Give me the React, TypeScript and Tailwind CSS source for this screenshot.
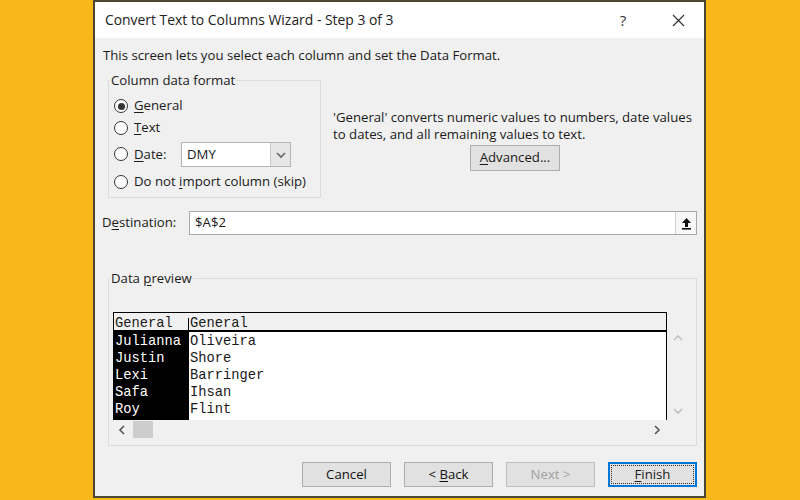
import React from 'react';

const ui = "font-['Open_Sans','Noto_Sans',sans-serif]";
const mono = "font-['Liberation_Mono','Courier_New',monospace]";

function Radio({ checked }: { checked?: boolean }) {
  return (
    <span className="flex h-[14px] w-[14px] shrink-0 items-center justify-center rounded-full border border-[#333] bg-white">
      {checked && <span className="h-[7px] w-[7px] rounded-full bg-[#333]" />}
    </span>
  );
}

function Option({ label, checked, className = '' }: { label: React.ReactNode; checked?: boolean; className?: string }) {
  return (
    <div className={`flex items-center gap-[6px] pl-[5px] ${className}`}>
      <Radio checked={checked} />
      <span className="whitespace-nowrap">{label}</span>
    </div>
  );
}

function Button({ children, variant = 'normal' }: { children: React.ReactNode; variant?: 'normal' | 'disabled' | 'default' }) {
  if (variant === 'default') {
    return (
      <div className="flex h-[25px] w-[89px] items-center justify-center border-2 border-[#0078d7] bg-[#e1e1e1] p-[1px]">
        <div className="flex h-full w-full items-center justify-center border border-dotted border-[#333]">{children}</div>
      </div>
    );
  }
  return (
    <div
      className={`flex h-[25px] w-[89px] items-center justify-center border bg-[#e1e1e1] ${
        variant === 'disabled' ? 'border-[#bfbfbf] bg-[#cccccc] text-[#a0a0a0]' : 'border-[#adadad] text-[#111]'
      }`}
    >
      {children}
    </div>
  );
}

function Chevron({ dir, className = '' }: { dir: 'up' | 'down' | 'left' | 'right'; className?: string }) {
  const pts = {
    up: '2,7 6,3 10,7',
    down: '2,4 6,8 10,4',
    left: '7,2 3,6 7,10',
    right: '4,2 8,6 4,10',
  }[dir];
  return (
    <svg width="12" height="12" viewBox="0 0 12 12" className={className}>
      <polyline points={pts} fill="none" stroke="currentColor" strokeWidth="1.6" />
    </svg>
  );
}

const rows = [
  ['Julianna', 'Oliveira'],
  ['Justin', 'Shore'],
  ['Lexi', 'Barringer'],
  ['Safa', 'Ihsan'],
  ['Roy', 'Flint'],
];

export default function App() {
  return (
    <div className={`h-[500px] w-[800px] bg-[#f9b81a] ${ui} text-[13.2px] text-[#1a1a1a]`}>
      <div className="ml-[93px] flex h-[498px] w-[613px] flex-col border-2 border-[#4a4632] bg-[#f0f0f0]">
        {/* Title bar */}
        <div className="flex h-[36px] items-center bg-white">
          <span className="flex-1 pl-[10px] text-[13.9px] text-[#222]">Convert Text to Columns Wizard - Step 3 of 3</span>
          <span className="flex w-[46px] justify-center text-[15px] text-[#333]">?</span>
          <span className="ml-[9px] mr-[3px] flex w-[46px] justify-center text-[#333]">
            <svg width="13" height="13" viewBox="0 0 13 13">
              <path d="M1 1L12 12M12 1L1 12" stroke="currentColor" strokeWidth="1.2" />
            </svg>
          </span>
        </div>

        <p className="mt-[9px] pl-[8px] leading-[16px]">This screen lets you select each column and set the Data Format.</p>

        {/* Format options + description */}
        <div className="mt-[9px] flex">
          <fieldset className="ml-[13px] h-[126px] w-[213px] border border-[#dcdcdc]">
            <legend className="ml-[1px] px-[1px] leading-[16px]">Column data format</legend>
            <div className="pt-[7px]">
              <Option checked className="h-[22px]" label={<><u className="underline-offset-2">G</u>eneral</>} />
              <Option className="h-[22px]" label={<><u className="underline-offset-2">T</u>ext</>} />
              <div className="mt-[3px] flex h-[25px] items-center">
                <Option className="w-[72px]" label={<><u className="underline-offset-2">D</u>ate:</>} />
                <div className="flex h-[25px] w-[110px] items-center border border-[#b4b4b4] bg-white">
                  <span className="flex-1 pl-[5px]">DMY</span>
                  <span className="flex h-full w-[20px] items-center justify-center border-l border-[#c8c8c8] bg-[#e6e6e6] text-[#666]">
                    <Chevron dir="down" />
                  </span>
                </div>
              </div>
              <Option
                className="mt-[4px] h-[22px]"
                label={<>Do not <u className="underline-offset-2">i</u>mport column (skip)</>}
              />
            </div>
          </fieldset>

          <div className="ml-[12px] mt-[37px] flex w-[364px] flex-col items-center">
            <div className="w-full whitespace-nowrap leading-[17px]">
              'General' converts numeric values to numbers, date values
            </div>
            <div className="w-full whitespace-nowrap leading-[17px]">to dates, and all remaining values to text.</div>
            <div className="mt-[2px] flex h-[26px] w-[90px] items-center justify-center border border-[#adadad] bg-[#e1e1e1]">
              <span><u className="underline-offset-2">A</u>dvanced...</span>
            </div>
          </div>
        </div>

        {/* Destination */}
        <div className="mt-[13px] flex h-[24px] items-center">
          <span className="w-[94px] pl-[7px]">D<u className="underline-offset-2">e</u>stination:</span>
          <div className="flex h-full w-[508px] items-center border border-[#a8a8a8] bg-white">
            <span className="flex-1 pl-[5px]">$A$2</span>
            <span className="flex h-full w-[21px] items-center justify-center border-l border-[#d0d0d0] bg-[#f7f7f7]">
              <svg width="11" height="13" viewBox="0 0 11 13">
                <path d="M5.5 1L1 6h3v4h3V6h3z" fill="#111" />
                <rect x="1" y="11" width="9" height="1.6" fill="#111" />
              </svg>
            </span>
          </div>
        </div>

        {/* Data preview */}
        <fieldset className="ml-[13px] mt-[35px] h-[176px] w-[589px] border border-[#dcdcdc]">
          <legend className="ml-[1px] px-[1px] leading-[16px]">
            Data <u className="underline-offset-2">p</u>review
          </legend>
          <div className="mt-[26px] pl-[4px]">
            <div className="flex">
              <div className={`w-[554px] ${mono} text-[13.75px] leading-[17px]`}>
                {/* column headers */}
                <div className="flex h-[18px] items-end overflow-hidden border-x border-t border-black bg-[#f0f0f0]">
                  <span className="w-[75px] border-r border-black pl-[1px] leading-[12px]">General</span>
                  <span className="flex-1 pl-[1px] leading-[12px]">General</span>
                </div>
                <div className="h-[2px] bg-black" />
                {/* rows */}
                <div className="flex h-[88px] border-r border-black bg-white">
                  <div className="w-[76px] bg-black pt-[1px] text-white">
                    {rows.map(([first]) => (
                      <div key={first} className="pl-[2px]">{first}</div>
                    ))}
                  </div>
                  <div className="flex-1 pt-[1px]">
                    {rows.map(([, last]) => (
                      <div key={last} className="pl-[1px]">{last}</div>
                    ))}
                  </div>
                </div>
              </div>
              {/* vertical scrollbar */}
              <div className="mt-[18px] flex h-[90px] w-[21px] flex-col items-center justify-between py-[3px] text-[#c0c0c0]">
                <Chevron dir="up" />
                <Chevron dir="down" />
              </div>
            </div>
            {/* horizontal scrollbar */}
            <div className="flex h-[19px] w-[554px] items-center text-[#555]">
              <span className="flex w-[20px] justify-center">
                <Chevron dir="left" />
              </span>
              <span className="h-[17px] w-[20px] bg-[#cdcdcd]" />
              <span className="flex-1" />
              <span className="flex w-[20px] justify-center">
                <Chevron dir="right" />
              </span>
            </div>
          </div>
        </fieldset>

        {/* Footer buttons */}
        <div className="mt-[16px] flex justify-end gap-[13px] pr-[7px]">
          <Button>Cancel</Button>
          <Button>
            <span>&lt; <u className="underline-offset-2">B</u>ack</span>
          </Button>
          <Button variant="disabled">Next &gt;</Button>
          <Button variant="default">
            <span><u className="underline-offset-2">F</u>inish</span>
          </Button>
        </div>
      </div>
    </div>
  );
}
